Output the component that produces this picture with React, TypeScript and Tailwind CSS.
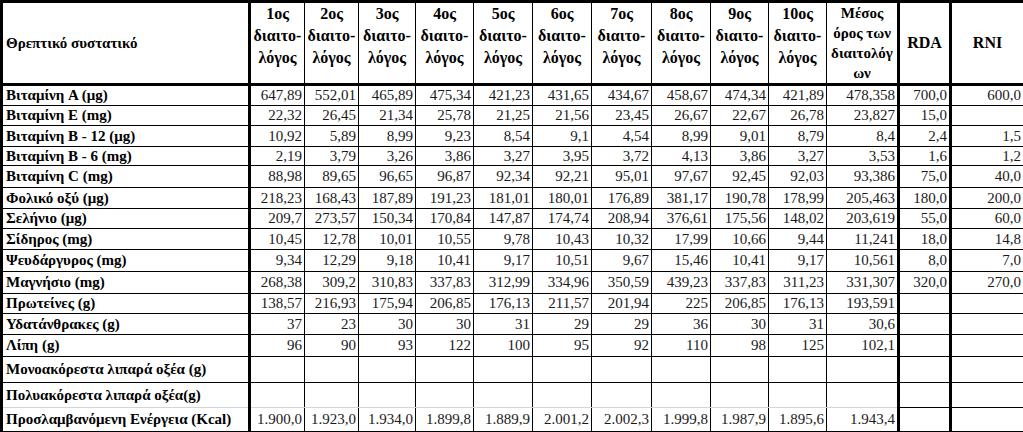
import React from 'react';

const cols = [248, 55, 54, 57, 58, 59, 59, 60, 59, 58, 58, 72, 52, 74];

const dietCols = ['1ος', '2ος', '3ος', '4ος', '5ος', '6ος', '7ος', '8ος', '9ος', '10ος'];

const empty = ['', '', '', '', '', '', '', '', '', '', '', '', ''];

const rows: { label: string; h: string; values: string[] }[] = [
  { label: 'Βιταμίνη A (μg)', h: 'h-[21px]', values: ['647,89', '552,01', '465,89', '475,34', '421,23', '431,65', '434,67', '458,67', '474,34', '421,89', '478,358', '700,0', '600,0'] },
  { label: 'Βιταμίνη E (mg)', h: 'h-[20px]', values: ['22,32', '26,45', '21,34', '25,78', '21,25', '21,56', '23,45', '26,67', '22,67', '26,78', '23,827', '15,0', ''] },
  { label: 'Βιταμίνη B - 12 (μg)', h: 'h-[21px]', values: ['10,92', '5,89', '8,99', '9,23', '8,54', '9,1', '4,54', '8,99', '9,01', '8,79', '8,4', '2,4', '1,5'] },
  { label: 'Βιταμίνη B - 6 (mg)', h: 'h-[19px]', values: ['2,19', '3,79', '3,26', '3,86', '3,27', '3,95', '3,72', '4,13', '3,86', '3,27', '3,53', '1,6', '1,2'] },
  { label: 'Βιταμίνη C (mg)', h: 'h-[22px]', values: ['88,98', '89,65', '96,65', '96,87', '92,34', '92,21', '95,01', '97,67', '92,45', '92,03', '93,386', '75,0', '40,0'] },
  { label: 'Φολικό οξύ (μg)', h: 'h-[21px]', values: ['218,23', '168,43', '187,89', '191,23', '181,01', '180,01', '176,89', '381,17', '190,78', '178,99', '205,463', '180,0', '200,0'] },
  { label: 'Σελήνιο (μg)', h: 'h-[20px]', values: ['209,7', '273,57', '150,34', '170,84', '147,87', '174,74', '208,94', '376,61', '175,56', '148,02', '203,619', '55,0', '60,0'] },
  { label: 'Σίδηρος (mg)', h: 'h-[21px]', values: ['10,45', '12,78', '10,01', '10,55', '9,78', '10,43', '10,32', '17,99', '10,66', '9,44', '11,241', '18,0', '14,8'] },
  { label: 'Ψευδάργυρος (mg)', h: 'h-[22px]', values: ['9,34', '12,29', '9,18', '10,41', '9,17', '10,51', '9,67', '15,46', '10,41', '9,17', '10,561', '8,0', '7,0'] },
  { label: 'Μαγνήσιο (mg)', h: 'h-[22px]', values: ['268,38', '309,2', '310,83', '337,83', '312,99', '334,96', '350,59', '439,23', '337,83', '311,23', '331,307', '320,0', '270,0'] },
  { label: 'Πρωτείνες (g)', h: 'h-[20px]', values: ['138,57', '216,93', '175,94', '206,85', '176,13', '211,57', '201,94', '225', '206,85', '176,13', '193,591', '', ''] },
  { label: 'Υδατάνθρακες (g)', h: 'h-[21px]', values: ['37', '23', '30', '30', '31', '29', '29', '36', '30', '31', '30,6', '', ''] },
  { label: 'Λίπη (g)', h: 'h-[22px]', values: ['96', '90', '93', '122', '100', '95', '92', '110', '98', '125', '102,1', '', ''] },
  { label: 'Μονοακόρεστα λιπαρά οξέα (g)', h: 'h-[26px]', values: empty },
  { label: 'Πολυακόρεστα λιπαρά οξέα(g)', h: 'h-[25px]', values: empty },
  { label: 'Προσλαμβανόμενη Ενέργεια (Kcal)', h: 'h-[25px]', values: ['1.900,0', '1.923,0', '1.934,0', '1.899,8', '1.889,9', '2.001,2', '2.002,3', '1.999,8', '1.987,9', '1.895,6', '1.943,4', '', ''] },
];

// thick rule before RDA and RNI
const sideBorder = (i: number) => (i >= 11 ? 'border-l-[3px]' : '');

export default function App() {
  return (
    <div className="w-[1023px] h-[432px] bg-white overflow-hidden font-['Liberation_Serif','Times_New_Roman',serif] text-black">
      <table className="table-fixed border-collapse border-[3px] border-black w-[1022px]">
        <colgroup>
          {cols.map((w, i) => (
            <col key={i} style={{ width: w }} />
          ))}
        </colgroup>
        <thead>
          <tr className="h-[80px]">
            <th className="border border-r-[3px] border-b-[3px] border-black text-left align-middle px-[3px] text-[15px] font-bold">
              Θρεπτικό συστατικό
            </th>
            {dietCols.map((d) => (
              <th key={d} className="border border-b-[3px] border-black text-center align-top text-[16px] font-bold leading-[22px] p-0">
                <div>{d}</div>
                <div>διαιτο-</div>
                <div>λόγος</div>
              </th>
            ))}
            <th className="border border-b-[3px] border-black text-center align-top text-[15px] font-bold leading-[20px] p-0">
              <div>Μέσος</div>
              <div>όρος των</div>
              <div>διαιτολόγ</div>
              <div>ων</div>
            </th>
            <th className="border border-l-[3px] border-b-[3px] border-black text-center align-middle text-[16px] font-bold p-0">RDA</th>
            <th className="border border-l-[3px] border-b-[3px] border-black text-center align-middle text-[16px] font-bold p-0">RNI</th>
          </tr>
        </thead>
        <tbody>
          {rows.map((r, ri) => {
            const beforeLast = ri === rows.length - 2;
            return (
              <tr key={r.label} className={r.h}>
                <td
                  className={`border border-r-[3px] border-black px-[3px] py-0 text-[15px] font-bold whitespace-nowrap leading-none ${
                    beforeLast ? 'border-b-gray-300' : ''
                  }`}
                >
                  {r.label}
                </td>
                {r.values.map((v, vi) => (
                  <td
                    key={vi}
                    className={`border border-black text-right pr-[2px] pl-0 py-0 text-[15px] leading-none text-[#1a1a1a] ${sideBorder(
                      vi
                    )} ${beforeLast && vi < 11 ? 'border-b-gray-300' : ''}`}
                  >
                    {v}
                  </td>
                ))}
              </tr>
            );
          })}
        </tbody>
      </table>
    </div>
  );
}
